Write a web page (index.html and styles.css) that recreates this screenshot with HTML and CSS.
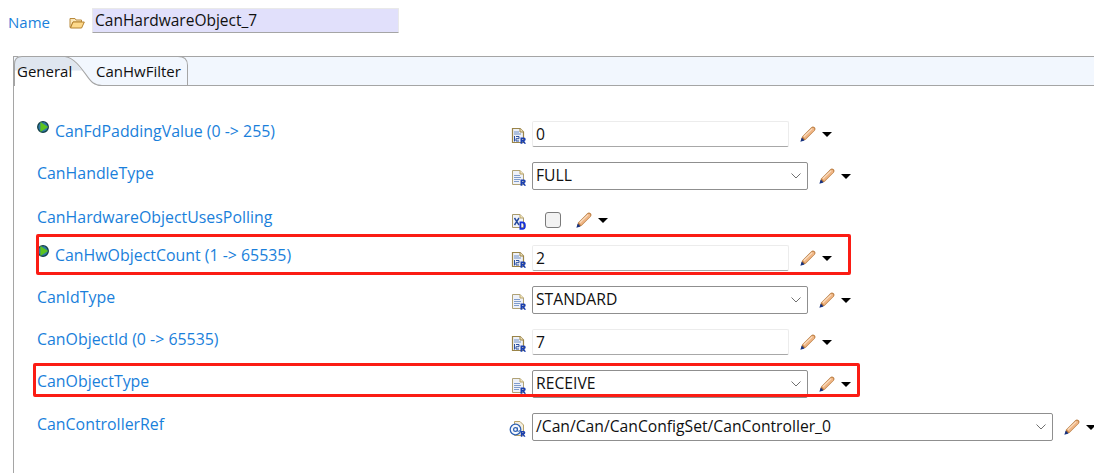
FILE: index.html
```html
<!DOCTYPE html>
<html lang="en">
<head>
<meta charset="utf-8">
<title>CanHardwareObject_7</title>
<link rel="stylesheet" href="styles.css">
</head>
<body>
<svg class="defs" width="0" height="0" aria-hidden="true">
  <defs>
    <symbol id="doc" viewBox="0 0 15 16">
      <path d="M1.500 .5H9L12.500 4V14.500H1.500Z" fill="#eef1f8" stroke="#b0a276"/>
      <path d="M9 .5V4H12.500" fill="#f3e6c0" stroke="#b8a368"/>
      <path d="M3 5.500H9M3 7.500H10M3 9.500H9M3 11.500H8" stroke="#7f9ccc"/>
      <path d="M9.500 9.500H13Q14.700 9.500 14.700 11.300T13.300 13L15 15.800H13.200L11.400 13.200V15.800H9.500ZM11.400 10.900V11.900H12.700V10.900Z" fill="#1a3fae"/>
    </symbol>
    <symbol id="doc-num" viewBox="0 0 15 16">
      <path d="M1.500 .5H9L12.500 4V14.500H1.500Z" fill="#eef1f8" stroke="#9a8448" stroke-width="1.200"/>
      <path d="M9 .5V4H12.500" fill="#f3e6c0" stroke="#9a8448"/>
      <path d="M3 4H8M3 6H10" stroke="#6f8fc4"/>
      <path d="M3.500 8V13.500M5 8.500H8V10.700H5V13H8" fill="none" stroke="#2a4f9e"/>
      <path d="M9.500 9.500H13Q14.700 9.500 14.700 11.300T13.300 13L15 15.800H13.200L11.400 13.200V15.800H9.500ZM11.400 10.900V11.900H12.700V10.900Z" fill="#1a3fae"/>
    </symbol>
    <symbol id="doc-xd" viewBox="0 0 15 16">
      <path d="M1.500 .5H9L12.500 4V13.500H1.500Z" fill="#f1f3f8" stroke="#a99a6c"/>
      <path d="M9 .5V4H12.500" fill="#f3e6c0" stroke="#b8a368"/>
      <path d="M3.500 4L8 11M8 4L3.500 11" stroke="#24489c" stroke-width="1.400"/>
      <path d="M8.500 7.500H11.300Q14.800 7.500 14.800 11.700T11.300 15.800H8.500ZM10.300 9.200V14.100H11.300Q13 14.100 13 11.700T11.300 9.200Z" fill="#1631d8"/>
    </symbol>
    <symbol id="doc-ref" viewBox="0 0 17 16">
      <path d="M5.500 .5H11L14.500 4V14.500H5.500Z" fill="#f3eee0" stroke="#b8a368"/>
      <circle cx="6.500" cy="8.500" r="5.300" fill="#f6f8fc" stroke="#2f62b4" stroke-width="1.300"/>
      <circle cx="6.500" cy="8.500" r="1.900" fill="none" stroke="#2f62b4" stroke-width="1.200"/>
      <path d="M8.400 6.500V10Q9.500 11 11.800 9" fill="none" stroke="#2f62b4"/>
      <path d="M11.800 10H14.800Q16.300 10 16.300 11.500T15 13.200L16.500 15.800H14.900L13.400 13.400V15.800H11.800ZM13.400 11.200V12.100H14.500V11.200Z" fill="#1a3fae"/>
    </symbol>
    <symbol id="pencil" viewBox="0 0 16 16">
      <path d="M1 15L2.200 10.400L11.400 1.200Q13 0 14.600 1.300T14.800 4.600L5.600 13.800Z" fill="#b87a3e"/>
      <path d="M2.800 10.700L11.800 1.900Q13 1 14 1.900T14.100 4.400L5.100 13.200Z" fill="#f0b685"/>
      <path d="M3.800 10.600L12.200 2.600" stroke="#fbe2c8" stroke-width="1.100"/>
      <path d="M.4 15.800L1.700 11.600L4.600 14.400Z" fill="#14307f"/>
    </symbol>
    <symbol id="badge" viewBox="0 0 12 12">
      <circle cx="6" cy="6" r="5.300" fill="#2f7aa8" stroke="#123f45" stroke-width="1.300"/>
      <path d="M3.400 1L11.200 6L3.400 11Z" fill="#5cc41e"/>
    </symbol>
  </defs>
</svg>

<div class="page">
  <header class="name-bar">
    <span class="name-label">Name</span>
    <svg class="folder" viewBox="0 0 16 13" aria-hidden="true">
      <path d="M1 2.500H6L7 4H12.500V6H4L1.500 11.500H1Z" fill="#fbe7ba" stroke="#b98a3c"/>
      <path d="M4 6H15.300L12.600 12H1.500Z" fill="#fdd98b" stroke="#b5822f"/>
    </svg>
    <div class="name-field">CanHardwareObject_7</div>
  </header>

  <section class="folder-panel">
    <div class="tab-strip">
      <svg class="tab-shape" viewBox="0 0 174 29" preserveAspectRatio="none" aria-hidden="true">
        <path d="M0 29V8Q0 0 8 0H51C60 2 66 10 72 18C77 25 80 29 88 29Z" fill="#ffffff"/>
        <path d="M0 14V8Q0 0 8 0H51C58 2 63 8 68 14Z" fill="#dfe6ef"/>
        <path d="M.5 29V8Q.5 .5 8 .5H164Q173.500 .5 173.500 9V28.500" fill="none" stroke="#a5a5a5"/>
        <path d="M51 .5C60 2 66 10 72 18C77 25 80 28.500 88 28.500H174" fill="none" stroke="#a5a5a5"/>
      </svg>
      <span class="tab tab-active">General</span>
      <span class="tab tab-second">CanHwFilter</span>
    </div>

    <div class="form">
      <div class="row">
        <div class="label has-badge"><svg class="badge"><use href="#badge"/></svg>CanFdPaddingValue (0 -&gt; 255)</div>
        <svg class="type-icon"><use href="#doc-num"/></svg>
        <div class="control"><div class="text-field">0</div><svg class="pencil"><use href="#pencil"/></svg><span class="caret"></span></div>
      </div>
      <div class="row">
        <div class="label">CanHandleType</div>
        <svg class="type-icon"><use href="#doc"/></svg>
        <div class="control"><div class="select">FULL<svg class="chevron" viewBox="0 0 10 6"><path d="M.5 .5L5 5L9.500 .5" fill="none" stroke="#707070"/></svg></div><svg class="pencil"><use href="#pencil"/></svg><span class="caret"></span></div>
      </div>
      <div class="row row-check">
        <div class="label">CanHardwareObjectUsesPolling</div>
        <svg class="type-icon"><use href="#doc-xd"/></svg>
        <div class="control"><span class="checkbox"></span><svg class="pencil pencil-check"><use href="#pencil"/></svg><span class="caret"></span></div>
      </div>
      <div class="row">
        <div class="label has-badge"><svg class="badge"><use href="#badge"/></svg>CanHwObjectCount (1 -&gt; 65535)</div>
        <svg class="type-icon"><use href="#doc-num"/></svg>
        <div class="control"><div class="text-field">2</div><svg class="pencil"><use href="#pencil"/></svg><span class="caret"></span></div>
      </div>
      <div class="row">
        <div class="label">CanIdType</div>
        <svg class="type-icon"><use href="#doc"/></svg>
        <div class="control"><div class="select">STANDARD<svg class="chevron" viewBox="0 0 10 6"><path d="M.5 .5L5 5L9.500 .5" fill="none" stroke="#707070"/></svg></div><svg class="pencil"><use href="#pencil"/></svg><span class="caret"></span></div>
      </div>
      <div class="row">
        <div class="label">CanObjectId (0 -&gt; 65535)</div>
        <svg class="type-icon"><use href="#doc-num"/></svg>
        <div class="control"><div class="text-field">7</div><svg class="pencil"><use href="#pencil"/></svg><span class="caret"></span></div>
      </div>
      <div class="row">
        <div class="label">CanObjectType</div>
        <svg class="type-icon"><use href="#doc"/></svg>
        <div class="control"><div class="select">RECEIVE<svg class="chevron" viewBox="0 0 10 6"><path d="M.5 .5L5 5L9.500 .5" fill="none" stroke="#707070"/></svg></div><svg class="pencil"><use href="#pencil"/></svg><span class="caret"></span></div>
      </div>
      <div class="row row-last">
        <div class="label">CanControllerRef</div>
        <svg class="type-icon type-icon-ref"><use href="#doc-ref"/></svg>
        <div class="control"><div class="select select-wide">/Can/Can/CanConfigSet/CanController_0<svg class="chevron" viewBox="0 0 10 6"><path d="M.5 .5L5 5L9.500 .5" fill="none" stroke="#707070"/></svg></div><svg class="pencil"><use href="#pencil"/></svg><span class="caret"></span></div>
      </div>
    </div>
  </section>

  <div class="callout callout-count"></div>
  <div class="callout callout-type"></div>
</div>
</body>
</html>
```

FILE: styles.css
```css
* {
  box-sizing: border-box;
}

html,
body {
  margin: 0;
  height: 100%;
  overflow: hidden;
  background: #ffffff;
}

body {
  font-family: "Open Sans", "Noto Sans", sans-serif;
  font-size: 15.5px;
  color: #101010;
}

.defs {
  display: block;
  height: 0;
}

.page {
  position: relative;
  height: 473px;
  overflow: hidden;
}

/* Name bar */
.name-bar {
  display: flex;
  align-items: center;
  height: 56px;
  padding: 8px 0 23px 8px;
}

.name-label {
  flex: none;
  width: 61px;
  font-size: 15px;
  color: #1a7fdb;
  padding-top: 3px;
}

.folder {
  width: 16px;
  height: 13px;
  margin-top: 3px;
}

.name-field {
  width: 307px;
  height: 25px;
  margin-left: 7px;
  padding: 0 0 2px 2px;
  line-height: 23px;
  background: #e1e0fb;
  border: 1px solid #e9e9e9;
  border-bottom-color: #a5a5a5;
  border-radius: 1px;
}

/* Tab folder */
.folder-panel {
  margin-left: 13px;
  height: 417px;
  border-left: 1px solid #a5a5a5;
}

.tab-strip {
  position: relative;
  display: flex;
  height: 30px;
  background: #f2f7fe;
  border-top: 1px solid #a5a5a5;
  border-bottom: 1px solid #a5a5a5;
}

.tab-shape {
  position: absolute;
  left: 0;
  top: -1px;
  width: 174px;
  height: 30px;
}

.tab {
  position: relative;
  font-size: 15px;
  line-height: 28px;
  white-space: nowrap;
}

.tab-active {
  width: 82px;
  padding-left: 3px;
}

.tab-second {
  width: 92px;
}

/* Form */
.form {
  padding: 27px 0 0 23px;
}

.row {
  display: flex;
  align-items: center;
  height: 42px;
}

.row-check {
  height: 40px;
  padding-top: 6px;
}

.row-last {
  margin-top: 1px;
}

.label {
  position: relative;
  flex: none;
  width: 474px;
  padding-bottom: 7px;
  font-size: 15.9px;
  color: #1a7fdb;
  white-space: nowrap;
}

.has-badge {
  padding-left: 18px;
}

.badge {
  position: absolute;
  left: 0;
  top: 1px;
  width: 12px;
  height: 12px;
}

.type-icon {
  flex: none;
  width: 15px;
  height: 16px;
  margin-right: 6px;
  transform: translateY(2px);
}

.type-icon-ref {
  width: 17px;
  margin-left: -2px;
}

.control {
  display: flex;
  align-items: center;
  flex: none;
  font-size: 15.7px;
}

.text-field {
  width: 257px;
  height: 26px;
  padding-left: 3px;
  line-height: 24px;
  border: 1px solid #ececec;
  border-bottom-color: #a8a8a8;
  border-radius: 2px;
  background: #ffffff;
}

.select {
  display: flex;
  align-items: center;
  justify-content: space-between;
  width: 276px;
  height: 28px;
  padding: 0 6px 2px 3px;
  border: 1px solid #8f8f8f;
  border-radius: 2px;
  background: #ffffff;
}

.select-wide {
  width: 521px;
}

.chevron {
  width: 10px;
  height: 6px;
  margin-top: 2px;
}

.checkbox {
  width: 16px;
  height: 16px;
  margin-left: 13px;
  background: #f2f2f2;
  border: 1px solid #7a7a7a;
  border-radius: 3px;
}

.pencil {
  width: 16px;
  height: 16px;
  margin-left: 11px;
  flex: none;
}

.pencil-check {
  margin-left: 15px;
}

.caret {
  width: 0;
  height: 0;
  margin-left: 6px;
  border-left: 5.500px solid transparent;
  border-right: 5.500px solid transparent;
  border-top: 5px solid #000000;
}

/* Red annotations over the form */
.callout {
  position: absolute;
  border: 3px solid #fb1c14;
  border-radius: 2px;
}

.callout-count {
  left: 36px;
  top: 234px;
  width: 815px;
  height: 41px;
}

.callout-type {
  left: 33px;
  top: 363px;
  width: 827px;
  height: 34px;
}
```
